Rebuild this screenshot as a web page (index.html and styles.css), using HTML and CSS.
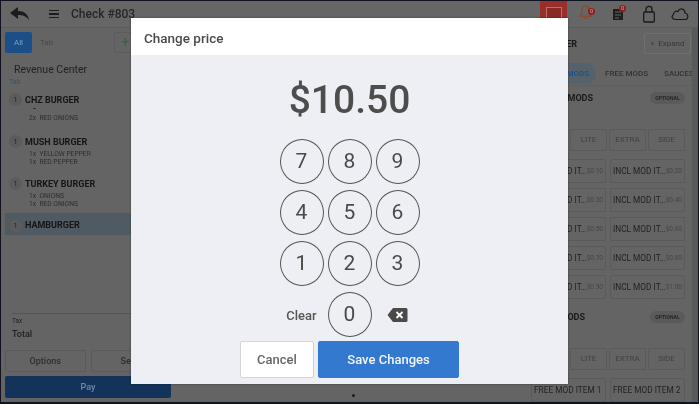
FILE: index.html
```html
<!DOCTYPE html>
<html lang="en">

<head>
  <meta charset="UTF-8">
  <meta name="viewport" content="width=device-width, initial-scale=1.0">
  <title>Change price</title>
  <link rel="stylesheet" href="styles.css">
</head>

<body>
  <div class="screen">
    <header class="topbar">
      <svg class="back-icon" width="20" height="14" viewBox="0 0 20 14"><path d="M0 6 L8 0 V4 C14 4 18 7 19 13 C16 9 13 8 8 8 V12 Z" fill="#1c1c1c"/></svg>
      <div class="menu-icon"><span></span><span></span><span></span></div>
      <div class="check-title">Check #803</div>
      <div class="topbar-right">
        <div class="stop-btn"><span></span></div>
        <div class="top-icon">
          <svg class="bell-icon" width="13" height="17" viewBox="0 0 16 20"><path d="M8 2 C4.5 2 3.5 5 3.5 8 C3.5 11 2.5 13 1 14.5 H15 C13.5 13 12.5 11 12.5 8 C12.5 5 11.5 2 8 2 Z M6 16 C6.5 18 9.5 18 10 16" fill="none" stroke="#8a4a28" stroke-width="1.5"/></svg>
          <span class="badge">0</span>
        </div>
        <div class="top-icon">
          <svg width="16" height="20" viewBox="0 0 16 20"><path d="M3 5 H13 V16 H3 Z" fill="#1f1f1f"/><path d="M5 8 H11 M5 11 H11 M5 14 H9" stroke="#666" stroke-width="1"/></svg>
          <span class="badge">0</span>
        </div>
        <div class="top-icon">
          <svg width="16" height="20" viewBox="0 0 16 20"><rect x="2.7" y="8" width="10.6" height="10" rx="1" fill="none" stroke="#1a1a1a" stroke-width="1.3"/><path d="M5 8 V5 C5 1.5 11 1.5 11 5 V8" fill="none" stroke="#1a1a1a" stroke-width="1.3"/></svg>
        </div>
        <div class="top-icon">
          <svg width="18" height="14" viewBox="0 0 18 14"><path d="M4.5 12.5 C1 12.5 0 9 2.5 7.5 C2.5 4.5 5.5 3.5 7 4.5 C9 0.5 14 1.5 14 6 C17.5 6.5 18 12.5 14 12.5 Z" fill="none" stroke="#1a1a1a" stroke-width="1.2"/></svg>
        </div>
      </div>
    </header>

    <div class="main">
      <aside class="order-panel">
        <div class="tabs">
          <div class="tab-all">All</div>
          <div class="tab-name">Tab</div>
          <div class="tab-add">+</div>
        </div>
        <div class="revenue">Revenue Center</div>
        <div class="tab-row"><span>Tab</span><span class="chevron"></span></div>

        <div class="order-item">
          <div class="item-line"><span class="qty">1</span><span class="item-name">CHZ BURGER</span></div>
          <div class="item-dash"></div>
          <div class="mod">2x&nbsp; RED ONIONS</div>
        </div>
        <div class="order-item">
          <div class="item-line"><span class="qty">1</span><span class="item-name">MUSH BURGER</span></div>
          <div class="mod">1x&nbsp; YELLOW PEPPER</div>
          <div class="mod">1x&nbsp; RED PEPPER</div>
        </div>
        <div class="order-item">
          <div class="item-line"><span class="qty">1</span><span class="item-name">TURKEY BURGER</span></div>
          <div class="mod">1x&nbsp; ONIONS</div>
          <div class="mod">1x&nbsp; RED ONIONS</div>
        </div>
        <div class="order-item selected">
          <div class="item-line"><span class="qty">1</span><span class="item-name">HAMBURGER</span></div>
        </div>

        <div class="totals">
          <div class="tax">Tax</div>
          <div class="total">Total</div>
        </div>
        <div class="action-row">
          <div class="action-btn">Options</div>
          <div class="action-btn">Send</div>
        </div>
        <div class="pay-btn">Pay</div>
      </aside>

      <div class="center-panel"><span class="dot"></span></div>

      <aside class="mods-panel">
        <div class="mods-head">
          <div class="mods-title">MODIFIER</div>
          <div class="expand-btn"><span class="expand-arrows">«</span> Expand</div>
        </div>
        <div class="mods-tabs">
          <span class="mods-tab active">INCL MODS</span>
          <span class="mods-tab">FREE MODS</span>
          <span class="mods-tab">SAUCES</span>
        </div>
        <div class="section-head">
          <div class="section-title">INCL MODS</div>
          <div class="optional">OPTIONAL</div>
        </div>
        <div class="size-row">
          <div class="mod-btn">NO</div>
          <div class="mod-btn">LITE</div>
          <div class="mod-btn">EXTRA</div>
          <div class="mod-btn">SIDE</div>
        </div>
        <div class="mod-grid">
          <div class="mod-item"><span class="mod-name">INCL MOD IT…</span><span class="mod-price">$0.10</span></div>
          <div class="mod-item"><span class="mod-name">INCL MOD IT…</span><span class="mod-price">$0.20</span></div>
          <div class="mod-item"><span class="mod-name">INCL MOD IT…</span><span class="mod-price">$0.30</span></div>
          <div class="mod-item"><span class="mod-name">INCL MOD IT…</span><span class="mod-price">$0.40</span></div>
          <div class="mod-item"><span class="mod-name">INCL MOD IT…</span><span class="mod-price">$0.50</span></div>
          <div class="mod-item"><span class="mod-name">INCL MOD IT…</span><span class="mod-price">$0.60</span></div>
          <div class="mod-item"><span class="mod-name">INCL MOD IT…</span><span class="mod-price">$0.70</span></div>
          <div class="mod-item"><span class="mod-name">INCL MOD IT…</span><span class="mod-price">$0.80</span></div>
          <div class="mod-item"><span class="mod-name">INCL MOD IT…</span><span class="mod-price">$0.90</span></div>
          <div class="mod-item"><span class="mod-name">INCL MOD IT…</span><span class="mod-price">$1.00</span></div>
        </div>
        <div class="section-head second">
          <div class="section-title">FREE MODS</div>
          <div class="optional">OPTIONAL</div>
        </div>
        <div class="size-row">
          <div class="mod-btn">NO</div>
          <div class="mod-btn">LITE</div>
          <div class="mod-btn">EXTRA</div>
          <div class="mod-btn">SIDE</div>
        </div>
        <div class="mod-grid">
          <div class="mod-item"><span class="mod-name">FREE MOD ITEM 1</span></div>
          <div class="mod-item"><span class="mod-name">FREE MOD ITEM 2</span></div>
        </div>
      </aside>
      <div class="scroll-strip"></div>
    </div>

    <div class="modal">
      <div class="modal-head">Change price</div>
      <div class="modal-body">
        <div class="amount">$10.50</div>
        <div class="keypad">
          <div class="key">7</div>
          <div class="key">8</div>
          <div class="key">9</div>
          <div class="key">4</div>
          <div class="key">5</div>
          <div class="key">6</div>
          <div class="key">1</div>
          <div class="key">2</div>
          <div class="key">3</div>
          <div class="clear">Clear</div>
          <div class="key">0</div>
          <div class="backspace">
            <svg width="21" height="16" viewBox="0 0 21 16"><path d="M6 1 H19 Q20.5 1 20.5 2.5 V13.5 Q20.5 15 19 15 H6 L0.5 8 Z" fill="#4a4a4a"/><path d="M9.5 5 L15.5 11 M15.5 5 L9.5 11" stroke="#fff" stroke-width="1.8"/></svg>
          </div>
        </div>
        <div class="modal-actions">
          <div class="btn-cancel">Cancel</div>
          <div class="btn-save">Save Changes</div>
        </div>
      </div>
    </div>
  </div>
</body>

</html>
```

FILE: styles.css
```css
* {
  box-sizing: border-box;
}

body {
  margin: 0;
  background: #000;
  font-family: "Roboto", sans-serif;
  overflow: hidden;
}

.screen {
  position: relative;
  width: 699px;
  height: 404px;
  padding: 1px 1px 2px 1px;
  background: #10131f;
  display: flex;
  flex-direction: column;
  overflow: hidden;
  filter: blur(0.35px);
}

/* top bar */
.topbar {
  height: 27px;
  flex: none;
  display: flex;
  align-items: center;
  background: #666;
  padding: 0 3px 0 9px;
  border-bottom: 1px solid #5c5c5c;
}

.menu-icon {
  width: 10px;
  margin-left: 19px;
  display: flex;
  flex-direction: column;
  gap: 2px;
}

.menu-icon span {
  height: 1.5px;
  background: #1c1c1c;
}

.check-title {
  margin-left: 12px;
  font-size: 12px;
  font-weight: 500;
  color: #262626;
}

.topbar-right {
  margin-left: auto;
  display: flex;
  align-items: center;
  height: 100%;
}

.stop-btn {
  width: 27px;
  height: 27px;
  margin-right: 4px;
  background: #9a2e2a;
  display: flex;
  align-items: center;
  justify-content: center;
}

.stop-btn span {
  width: 16px;
  height: 15px;
  background: #8a2a27;
  border: 1px solid #b9706c;
}

.top-icon {
  position: relative;
  width: 31px;
  display: flex;
  justify-content: center;
}

.bell-icon {
  margin: -3px 2px 0 0;
}

.badge {
  position: absolute;
  top: 1px;
  right: 7px;
  width: 7px;
  height: 7px;
  border-radius: 50%;
  background: #8e1f1f;
  color: #d8b0b0;
  font-size: 5.5px;
  line-height: 7px;
  text-align: center;
}

.main {
  flex: 1;
  min-height: 0;
  display: flex;
}

/* left order panel */
.order-panel {
  width: 174px;
  flex: none;
  display: flex;
  flex-direction: column;
  padding: 4px 4px 4px;
  background: #646464;
}

.tabs {
  height: 21px;
  flex: none;
  display: flex;
  align-items: stretch;
  font-size: 8px;
}

.tab-all {
  width: 27px;
  background: #1c4f88;
  color: #7f9fc2;
  border-radius: 2px;
  display: flex;
  align-items: center;
  justify-content: center;
}

.tab-name {
  width: 82px;
  padding-left: 8px;
  display: flex;
  align-items: center;
  color: #4a4a4a;
}

.tab-add {
  width: 50px;
  padding-left: 6px;
  border: 1px solid #5c5c5c;
  border-radius: 2px;
  color: #2a6b3a;
  font-size: 15px;
  line-height: 18px;
}

.revenue {
  margin: 10px 0 0 9px;
  font-size: 10.5px;
  line-height: 13px;
  color: #222;
}

.tab-row {
  margin: 2px 0 0 4px;
  padding-right: 36px;
  display: flex;
  justify-content: space-between;
  align-items: center;
  font-size: 7px;
  line-height: 9px;
  color: #25588f;
}

.chevron {
  width: 3px;
  height: 3px;
  border-right: 1px solid #1c3f66;
  border-bottom: 1px solid #1c3f66;
  transform: rotate(45deg);
}

.order-item {
  height: 42px;
  padding: 6px 0 0 4px;
}

.order-item.selected {
  height: 22px;
  padding: 2px 0 0 4px;
  display: flex;
  align-items: center;
  background: #4f5a62;
}

.item-line {
  display: flex;
  align-items: center;
  height: 13px;
  margin-bottom: 2px;
}

.selected .item-line {
  margin-bottom: 0;
}

.qty {
  width: 13px;
  height: 13px;
  margin-right: 3px;
  border-radius: 50%;
  background: #5c5c5c;
  color: #262626;
  font-size: 8px;
  line-height: 13px;
  text-align: center;
}

.item-name {
  font-size: 9px;
  font-weight: 700;
  color: #151515;
}

.item-dash {
  width: 3px;
  height: 1px;
  margin: 0 0 5px 24px;
  background: #333;
}

.mod {
  margin-left: 20px;
  font-size: 6.7px;
  line-height: 8px;
  color: #2e2e2e;
}

.totals {
  margin: auto 0 0 7px;
  padding-top: 3px;
  border-top: 1px solid #565656;
  color: #222;
}

.tax {
  font-size: 6.5px;
  line-height: 9px;
}

.total {
  margin-top: 2px;
  font-size: 9px;
  font-weight: 500;
  line-height: 13px;
}

.action-row {
  margin-top: 9px;
  display: flex;
  gap: 5px;
}

.action-btn {
  flex: 1;
  height: 22px;
  border: 1px solid #5a5a5a;
  border-radius: 2px;
  font-size: 9px;
  font-weight: 500;
  line-height: 20px;
  text-align: center;
  color: #2e2e2e;
}

.pay-btn {
  height: 22px;
  margin-top: 4px;
  background: #14335a;
  border-radius: 2px;
  font-size: 9px;
  font-weight: 500;
  line-height: 22px;
  text-align: center;
  color: #6f8aa8;
}

.center-panel {
  flex: 1;
  background: #646464;
  display: flex;
  align-items: flex-end;
  justify-content: center;
  padding-bottom: 5px;
}

.dot {
  width: 3px;
  height: 3px;
  margin-left: 4px;
  border-radius: 50%;
  background: #1c1c1c;
}

/* right modifier panel */
.mods-panel {
  width: 165px;
  flex: none;
  background: #646464;
  padding: 5px 7px 0 4px;
  overflow: hidden;
}

.scroll-strip {
  width: 6px;
  flex: none;
  background: #5a5a5a;
}

.mods-head {
  height: 21px;
  margin-right: -6px;
  display: flex;
  justify-content: flex-end;
  align-items: center;
  font-size: 9px;
  font-weight: 700;
  color: #1a1a1a;
}

.mods-title {
  margin-right: 67px;
}

.expand-btn {
  width: 47px;
  height: 21px;
  border: 1px solid #707070;
  border-radius: 2px;
  font-size: 8px;
  font-weight: 400;
  line-height: 19px;
  text-align: center;
  color: #383838;
}

.expand-arrows {
  margin-right: 2px;
}

.mods-tabs {
  height: 24px;
  margin: 8px -7px 0 0;
  display: flex;
  align-items: center;
  white-space: nowrap;
  overflow: hidden;
  border-bottom: 1px solid #5e5e5e;
  font-size: 8px;
  font-weight: 500;
  color: #333;
}

.mods-tab {
  flex: none;
  padding: 6px 8px;
}

.mods-tab.active {
  width: 65px;
  padding: 6px 7px 6px 0;
  margin-right: 1px;
  text-align: right;
  background: #55626c;
  border-radius: 10px;
  color: #1c4f88;
}

.section-head {
  height: 12px;
  margin-top: 6px;
  display: flex;
  justify-content: flex-end;
  align-items: center;
}

.section-head.second {
  margin-top: 12px;
}

.section-title {
  font-size: 9px;
  font-weight: 700;
  margin-right: 57px;
  color: #1a1a1a;
}

.section-head.second .section-title {
  margin-right: 65px;
}

.optional {
  width: 35px;
  height: 12px;
  border-radius: 7px;
  background: #5a5a5a;
  font-size: 5px;
  font-weight: 700;
  line-height: 12px;
  text-align: center;
  color: #262626;
}

.size-row {
  margin-top: 25px;
  display: grid;
  grid-template-columns: repeat(4, minmax(0, 1fr));
  gap: 2px;
}

.mod-btn {
  height: 22px;
  border: 1px solid #5a5a5a;
  border-radius: 2px;
  font-size: 8px;
  line-height: 20px;
  text-align: center;
  color: #404040;
}

.mod-grid {
  margin-top: 8px;
  display: grid;
  grid-template-columns: repeat(2, minmax(0, 1fr));
  gap: 5px 4px;
}

.mod-item {
  height: 24px;
  padding: 0 2px 0 2px;
  border: 1px solid #5a5a5a;
  border-radius: 2px;
  display: flex;
  align-items: center;
  justify-content: space-between;
  font-size: 8.3px;
  color: #222;
}

.mod-name {
  white-space: nowrap;
}

.mod-price {
  flex: none;
  font-size: 6.5px;
  color: #454545;
}

/* price modal */
.modal {
  position: absolute;
  left: 131px;
  top: 18px;
  width: 437px;
  height: 366px;
  display: flex;
  flex-direction: column;
  background: #eeeff4;
  box-shadow: 0 0 2px rgba(0, 0, 0, 0.4);
}

.modal-head {
  height: 37px;
  flex: none;
  padding-left: 13px;
  background: #fff;
  font-size: 13.5px;
  font-weight: 500;
  line-height: 40px;
  color: #4a4a4a;
}

.modal-body {
  flex: 1;
  display: flex;
  flex-direction: column;
  align-items: center;
}

.amount {
  margin-top: 20px;
  font-size: 39px;
  font-weight: 500;
  line-height: 50px;
  color: #4d4d4d;
}

.keypad {
  margin-top: 14px;
  display: grid;
  grid-template-columns: repeat(3, 44px);
  grid-auto-rows: 45px;
  gap: 6px 4px;
}

.key {
  border: 1.5px solid #555;
  border-radius: 50%;
  font-size: 21px;
  line-height: 42px;
  text-align: center;
  color: #4a4a4a;
}

.clear {
  font-size: 13px;
  font-weight: 500;
  line-height: 47px;
  color: #555;
  white-space: nowrap;
  text-align: center;
}

.backspace {
  display: flex;
  align-items: center;
  justify-content: center;
}

.modal-actions {
  margin-top: 4px;
  display: flex;
  gap: 4px;
}

.btn-cancel,
.btn-save {
  height: 37px;
  border-radius: 2px;
  font-size: 13px;
  font-weight: 500;
  line-height: 35px;
  text-align: center;
}

.btn-cancel {
  width: 74px;
  background: #fff;
  border: 1px solid #d4d4d8;
  color: #666;
}

.btn-save {
  width: 141px;
  background: #3379d0;
  border: 1px solid #3379d0;
  color: #f2f6fc;
}
```
